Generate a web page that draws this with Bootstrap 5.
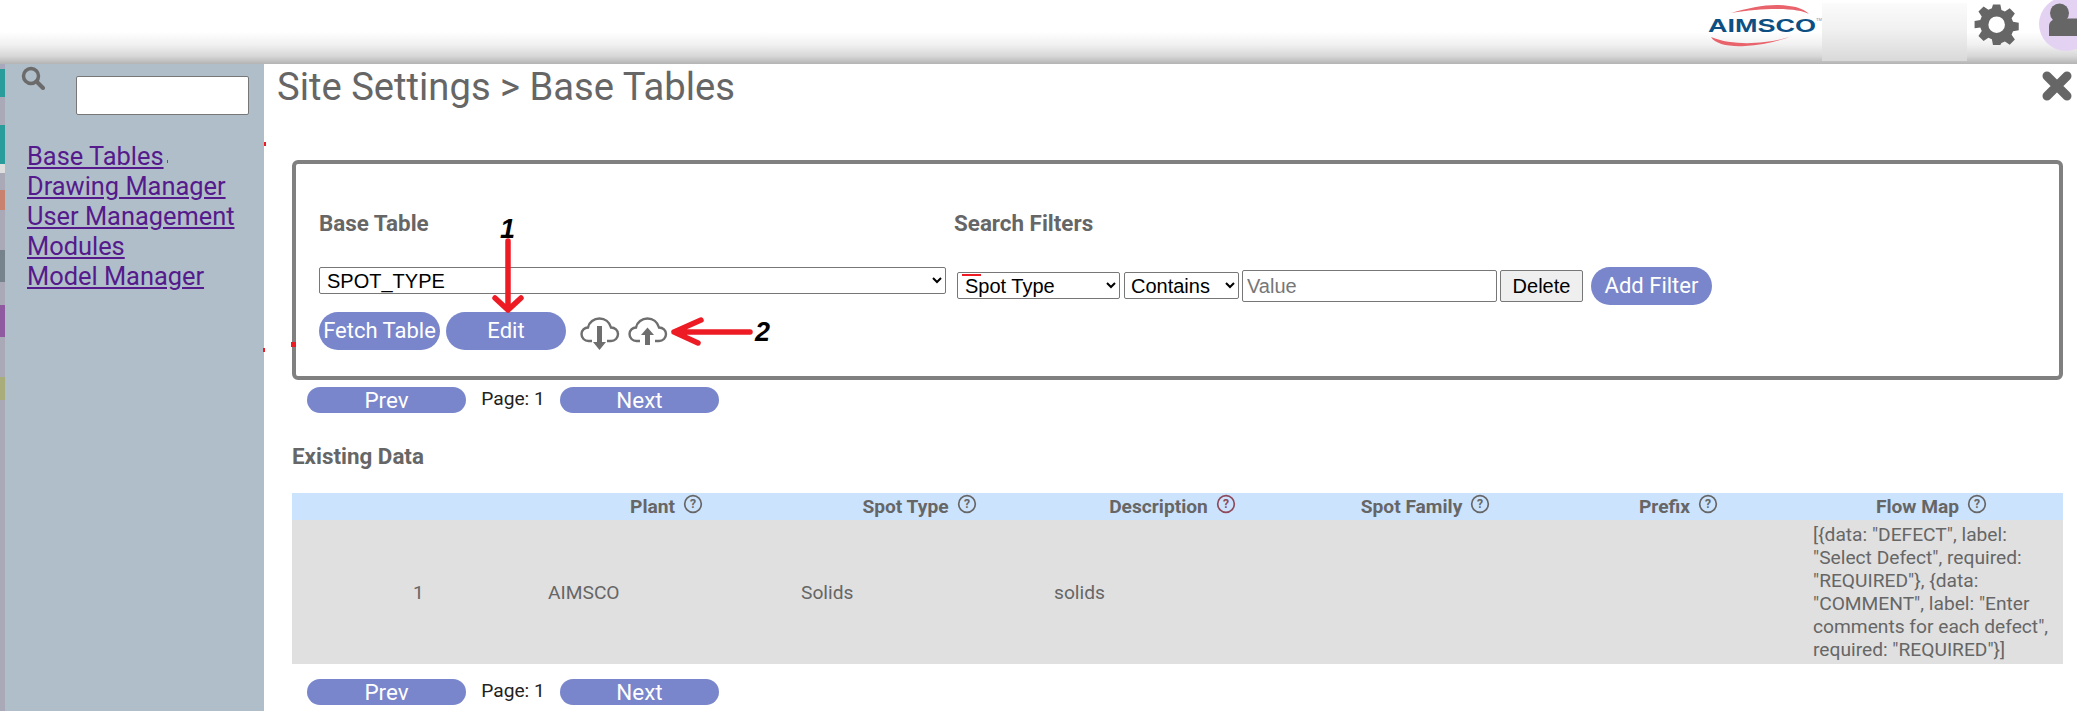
<!DOCTYPE html>
<html lang="en">
<head>
<meta charset="utf-8">
<title>Site Settings</title>
<link href="https://cdn.jsdelivr.net/npm/bootstrap@5.3.0/dist/css/bootstrap.min.css" rel="stylesheet">
<style>
html,body{height:711px;overflow:hidden;background:#fff;}
body{font-family:Roboto,"Liberation Sans",sans-serif;color:#666;position:relative;}
.top-strip{height:64px;background:linear-gradient(to bottom,#fff 0,#fff 32px,#f0f0f0 45px,#d8d8d8 56px,#b4b4b4 64px);}
.logo-box{width:115px;height:64px;}
.blur-patch{width:145px;height:58px;margin-top:3px;margin-right:6px;background:linear-gradient(to bottom,#fbfbfb,#f1f1f1 45%,#d9d9d9);}
.gear-box{width:46px;height:46px;margin-top:2px;margin-right:19px;}
.avatar-box{width:39px;height:64px;}
.main-area{height:647px;}
.left-strip{width:5px;flex:none;background:linear-gradient(to bottom,#a9a9bd 0,#a9a9bd 5px,#2a9c9c 5px,#2a9c9c 33px,#a9a9b8 33px,#a9a9b8 61px,#2a9c9c 61px,#2a9c9c 100px,#dedede 100px,#dedede 109px,#a9a9b8 109px,#a9a9b8 126px,#c9826e 126px,#c9826e 146px,#a9a9b8 146px,#a9a9b8 186px,#77838c 186px,#77838c 218px,#a9a9b8 218px,#a9a9b8 241px,#8f5a9f 241px,#8f5a9f 273px,#a9a9b8 273px,#a9a9b8 313px,#a9ad7a 313px,#a9ad7a 336px,#a9a9b8 336px);}
.side-panel{width:259px;flex:none;background:#b0bec9;padding:2px 0 0 16px;}
.search-line{height:75px;}
.search-field{width:173px;height:39px;margin:10px 0 0 31px;border:1px solid #777;border-radius:2px;background:#fff;display:block;}
.side-links a{display:block;font-size:25.4px;line-height:30px;color:#551a8b;margin-left:6px;}
.content-area{min-width:0;padding-left:13px;}
.page-title{font-size:38.2px;line-height:44px;font-weight:400;color:#666;margin:1px 0 0;}
.close-x{margin:7px 5px 0 0;width:30px;height:30px;}
.title-row{height:96px;}
.filter-box{margin:0 14px 0 15px;height:220px;border:4px solid #808080;border-radius:6px;padding:47px 23px 0;}
.box-label{font-size:22.4px;line-height:24px;font-weight:700;color:#666;margin:0;}
.label-a{width:635px;}
.input-row{margin-top:32px;height:38px;}
.base-select{width:627px;height:27px;font:20px "Liberation Sans",Arial,sans-serif;border:1px solid #777;border-radius:2px;background:#fff;color:#000;padding:0 0 0 3px;margin-right:11px;}
.f-select{height:27px;margin-top:5px;font:20px "Liberation Sans",Arial,sans-serif;border:1px solid #777;border-radius:2px;background:#fff;color:#000;padding:0;}
.f-one{width:163px;margin-right:4px;padding-left:3px;}
.f-two{width:115px;margin-right:3px;padding-left:2px;}
.f-input{width:255px;height:32px;margin-top:3px;margin-right:3px;font:20px "Liberation Sans",Arial,sans-serif;border:1px solid #777;border-radius:2px;padding:0 4px;}
.f-input::placeholder{color:#777;}
.f-delete{width:83px;height:32px;margin-top:3px;margin-right:8px;font:20px "Liberation Sans",Arial,sans-serif;color:#000;border:1px solid #777;border-radius:2px;background:#efefef;padding:0;}
.pill-btn{background:#7986cb;color:#fff;border:0;border-radius:19px;height:38px;font:400 22px/38px Roboto,sans-serif;padding:0;white-space:nowrap;}
.pill-fetch{width:121px;margin-right:6px;}
.pill-edit{width:120px;margin-right:14px;}
.pill-add{width:121px;}
.action-row{margin-top:7px;}
.cloud-ico{width:40px;height:34px;margin-top:5px;margin-right:8px;}
.pager-row{padding-left:15px;margin:7px 0 0 15px;height:26px;}
.pager-btn{width:159px;height:26px;border:0;border-radius:13px;background:#7986cb;color:#fff;font:400 22.4px/26px Roboto,sans-serif;padding:0;}
.pager-label{width:94px;text-align:center;color:#222;font-size:19.2px;line-height:24px;}
.section-head{font-size:22.4px;line-height:24px;font-weight:700;color:#666;margin:31px 0 0 15px;}
.data-wrap{margin:25px 14px 0 15px;}
.data-grid{table-layout:fixed;width:100%;margin:0;border-collapse:collapse;}
.data-grid th{background:#cce3fd;height:27px;padding:0 10px 2px 0;font-size:19.2px;line-height:22px;font-weight:700;color:#666;text-align:center;border:0;}
.data-grid td{background:#e0e0e0;height:144px;padding:3px;font-size:19.2px;line-height:23px;color:#666;vertical-align:middle;border:0;}
.help-ico{width:20px;height:20px;margin-left:8px;vertical-align:-1px;}
.pager-low{margin-top:15px;}
.mark-layer{position:absolute;left:0;top:0;width:2077px;height:711px;pointer-events:none;}
.mark-num{font:italic 700 27px "Liberation Sans",Arial,sans-serif;fill:#000;}
</style>
</head>
<body>
<div class="top-strip d-flex justify-content-end align-items-start">
  <svg class="logo-box" viewBox="0 0 115 64">
    <path d="M24 13C45 7 65 3 82 6C92 7 98 10 102 14C92 8 60 7 24 13Z" fill="#e8636b"/>
    <path d="M4 37C8 44 22 47 38 46C55 45 72 41 85 36C70 42 30 48 4 37Z" fill="#e8636b"/>
    <text x="1" y="32" font-family="Liberation Sans" font-weight="700" font-size="19" fill="#0d4f82" textLength="108" lengthAdjust="spacingAndGlyphs">AIMSCO</text>
    <text x="109" y="21" font-family="Liberation Sans" font-size="4" fill="#5b8fb5">TM</text>
  </svg>
  <div class="blur-patch"></div>
  <svg class="gear-box" viewBox="0 0 46 46">
    <path fill="#666" fill-rule="evenodd" d="M19 1h8l1.200 6.200 3.800 1.600 5.200-3.600 5.600 5.600-3.600 5.200 1.600 3.800 6.200 1.200v8l-6.200 1.200-1.600 3.800 3.600 5.200-5.600 5.600-5.200-3.600-3.800 1.600L27 45h-8l-1.200-6.200-3.800-1.600-5.200 3.600-5.600-5.600 3.600-5.200-1.600-3.800L-1 27v-8l6.200-1.200 1.600-3.800-3.600-5.200 5.600-5.600 5.200 3.600 3.800-1.600zM23 14a9 9 0 1 0 0 18 9 9 0 0 0 0-18z" transform="translate(2.500 1.500) scale(.92)"/>
  </svg>
  <svg class="avatar-box" viewBox="0 0 39 64">
    <circle cx="28" cy="24" r="27" fill="#e4d2f2"/>
    <circle cx="21.500" cy="13" r="9.500" fill="#666"/>
    <path d="M11 36V26C11 21 16 18.500 20 18.500H39V36Z" fill="#666"/>
  </svg>
</div>

<div class="main-area d-flex">
  <div class="left-strip"></div>
  <nav class="side-panel">
    <div class="search-line d-flex align-items-start">
      <svg width="24" height="24" viewBox="0 0 24 24"><circle cx="10" cy="10" r="7.500" fill="none" stroke="#6b6b6b" stroke-width="3.500"/><path d="M15.500 15.500L22 22" stroke="#6b6b6b" stroke-width="4" stroke-linecap="round"/></svg>
      <input class="search-field" type="text" aria-label="Search">
    </div>
    <div class="side-links">
      <a href="#">Base Tables</a>
      <a href="#">Drawing Manager</a>
      <a href="#">User Management</a>
      <a href="#">Modules</a>
      <a href="#">Model Manager</a>
    </div>
  </nav>
  <main class="content-area flex-grow-1">
    <div class="title-row d-flex justify-content-between align-items-start">
      <h1 class="page-title">Site Settings &gt; Base Tables</h1>
      <svg class="close-x" viewBox="0 0 30 30"><path d="M5 5L25 25M25 5L5 25" stroke="#666" stroke-width="9" stroke-linecap="round"/></svg>
    </div>
    <section class="filter-box">
      <div class="d-flex">
        <p class="box-label label-a">Base Table</p>
        <p class="box-label">Search Filters</p>
      </div>
      <div class="input-row d-flex align-items-start">
        <select class="base-select" aria-label="Base Table"><option>SPOT_TYPE</option></select>
        <select class="f-select f-one" aria-label="Field"><option>Spot Type</option></select>
        <select class="f-select f-two" aria-label="Operator"><option>Contains</option></select>
        <input class="f-input" type="text" placeholder="Value">
        <button class="f-delete" type="button">Delete</button>
        <button class="pill-btn pill-add" type="button">Add Filter</button>
      </div>
      <div class="action-row d-flex align-items-start">
        <button class="pill-btn pill-fetch" type="button">Fetch Table</button>
        <button class="pill-btn pill-edit" type="button">Edit</button>
        <svg class="cloud-ico" viewBox="0 0 40 34"><path d="M12 24H8.500C4.500 24 1.500 21 1.500 17C1.500 13.500 4.500 10.500 8 10.500C9 5 14 1.500 19.500 1.500C25 1.500 29.500 5 31 10.500C35 10.500 38 13.500 38 17C38 21 35 24 31 24H27" fill="none" stroke="#6e6e6e" stroke-width="2.400"/><path d="M17 9H22V25H26L19.500 33L13 25H17Z" fill="#6e6e6e"/></svg>
        <svg class="cloud-ico" viewBox="0 0 40 34"><path d="M12 24H8.500C4.500 24 1.500 21 1.500 17C1.500 13.500 4.500 10.500 8 10.500C9 5 14 1.500 19.500 1.500C25 1.500 29.500 5 31 10.500C35 10.500 38 13.500 38 17C38 21 35 24 31 24H27" fill="none" stroke="#6e6e6e" stroke-width="2.400"/><path d="M17 28H22V18H26L19.500 10.500L13 18H17Z" fill="#6e6e6e"/></svg>
      </div>
    </section>
    <div class="pager-row d-flex align-items-start">
      <button class="pager-btn" type="button">Prev</button>
      <span class="pager-label">Page: 1</span>
      <button class="pager-btn" type="button">Next</button>
    </div>
    <h2 class="section-head">Existing Data</h2>
    <div class="data-wrap">
      <table class="data-grid">
        <thead>
          <tr>
            <th></th>
            <th>Plant<svg class="help-ico" viewBox="0 0 18 18"><circle cx="9" cy="9" r="7.500" fill="none" stroke="#666" stroke-width="1.500"/><text x="9" y="13" text-anchor="middle" font-size="11" fill="#666" font-family="Roboto">?</text></svg></th>
            <th>Spot Type<svg class="help-ico" viewBox="0 0 18 18"><circle cx="9" cy="9" r="7.500" fill="none" stroke="#666" stroke-width="1.500"/><text x="9" y="13" text-anchor="middle" font-size="11" fill="#666" font-family="Roboto">?</text></svg></th>
            <th>Description<svg class="help-ico" viewBox="0 0 18 18"><circle cx="9" cy="9" r="7.500" fill="none" stroke="#8e4a5a" stroke-width="1.500"/><text x="9" y="13" text-anchor="middle" font-size="11" fill="#8e4a5a" font-family="Roboto">?</text></svg></th>
            <th>Spot Family<svg class="help-ico" viewBox="0 0 18 18"><circle cx="9" cy="9" r="7.500" fill="none" stroke="#666" stroke-width="1.500"/><text x="9" y="13" text-anchor="middle" font-size="11" fill="#666" font-family="Roboto">?</text></svg></th>
            <th>Prefix<svg class="help-ico" viewBox="0 0 18 18"><circle cx="9" cy="9" r="7.500" fill="none" stroke="#666" stroke-width="1.500"/><text x="9" y="13" text-anchor="middle" font-size="11" fill="#666" font-family="Roboto">?</text></svg></th>
            <th>Flow Map<svg class="help-ico" viewBox="0 0 18 18"><circle cx="9" cy="9" r="7.500" fill="none" stroke="#666" stroke-width="1.500"/><text x="9" y="13" text-anchor="middle" font-size="11" fill="#666" font-family="Roboto">?</text></svg></th>
          </tr>
        </thead>
        <tbody>
          <tr>
            <td class="text-center">1</td>
            <td>AIMSCO</td>
            <td>Solids</td>
            <td>solids</td>
            <td></td>
            <td></td>
            <td>[{data: "DEFECT", label: "Select Defect", required: "REQUIRED"}, {data: "COMMENT", label: "Enter comments for each defect", required: "REQUIRED"}]</td>
          </tr>
        </tbody>
      </table>
    </div>
    <div class="pager-row pager-low d-flex align-items-start">
      <button class="pager-btn" type="button">Prev</button>
      <span class="pager-label">Page: 1</span>
      <button class="pager-btn" type="button">Next</button>
    </div>
  </main>
</div>

<svg class="mark-layer" viewBox="0 0 2077 711" aria-hidden="true">
  <g fill="none" stroke="#ed1c24" stroke-width="5.500" stroke-linecap="round" stroke-linejoin="round">
    <path d="M508 241V309M495 298L508 310L521 298"/>
    <path d="M750 332H674M701 320L674 332L698 343"/>
  </g>
  <text class="mark-num" x="500" y="238">1</text>
  <text class="mark-num" x="755" y="341">2</text>
  <g fill="#ed1c24">
    <rect x="264" y="142" width="2" height="4"/>
    <rect x="167" y="160" width="1" height="3"/>
    <rect x="263" y="348" width="2" height="4"/>
    <rect x="291" y="342" width="5" height="5"/>
    <rect x="962" y="274" width="19" height="2"/>
  </g>
</svg>
<script src="https://cdn.jsdelivr.net/npm/bootstrap@5.3.0/dist/js/bootstrap.bundle.min.js"></script>
</body>
</html>
